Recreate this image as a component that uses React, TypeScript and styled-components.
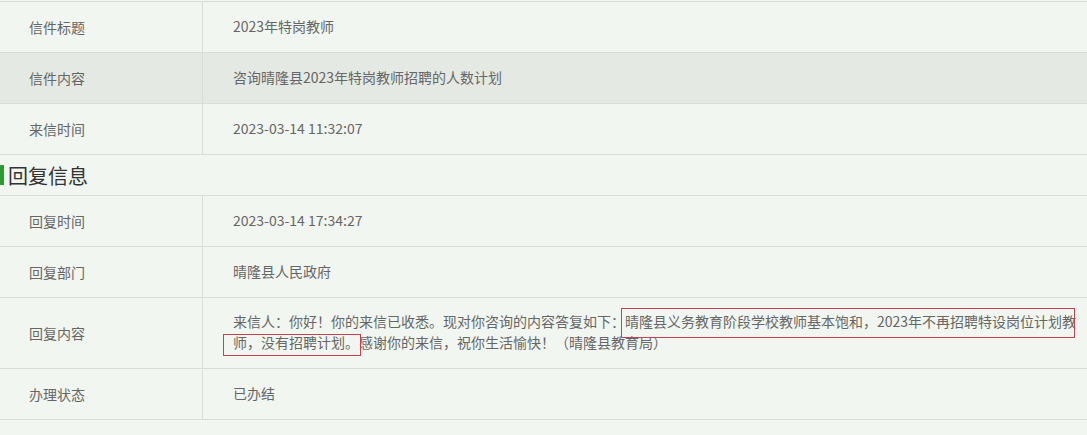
import React from 'react';
import styled, { createGlobalStyle } from 'styled-components';

const GlobalStyle = createGlobalStyle`
  html, body {
    margin: 0;
    padding: 0;
    background: #f1f6f1;
  }
  body {
    font-family: "Noto Sans CJK SC", "Microsoft YaHei", sans-serif;
    color: #666;
  }
`;

const Page = styled.div`
  padding-top: 1px;
  min-height: 434px;
`;

const Table = styled.div<{ $top?: boolean }>`
  display: flex;
  flex-direction: column;
  border-top: ${p => (p.$top ? '1px solid #d9ddd8' : 'none')};
`;

const Row = styled.div<{ $shade?: boolean }>`
  display: grid;
  grid-template-columns: 203px 1fr;
  background: ${p => (p.$shade ? '#e4e9e3' : '#f1f6f1')};
  border-bottom: 1px solid #d9ddd8;
  min-height: 50px;
`;

const Label = styled.div`
  box-sizing: border-box;
  border-right: 1px solid #d9ddd8;
  padding-left: 29px;
  padding-bottom: 1px;
  display: flex;
  align-items: center;
  font-size: 14px;
  color: #666;
`;

const Value = styled.div`
  box-sizing: border-box;
  padding: 13px 9px 15px 30px;
  display: flex;
  align-items: center;
  font-size: 14px;
  line-height: 21px;
  color: #666;
`;

const Text = styled.p`
  margin: 0;
`;

const SectionTitle = styled.h3`
  margin: 0;
  height: 40px;
  display: flex;
  align-items: center;
  gap: 4px;
  font-size: 20px;
  font-weight: normal;
  color: #333;
  border-bottom: 1px solid #d9ddd8;

  &::before {
    content: '';
    width: 4px;
    height: 20px;
    background: #2f9a34;
  }
`;

const Mark = styled.span<{ $t: number; $r: number; $b: number; $l: number }>`
  position: relative;
  white-space: nowrap;

  &::after {
    content: '';
    position: absolute;
    top: ${p => p.$t}px;
    right: ${p => p.$r}px;
    bottom: ${p => p.$b}px;
    left: ${p => p.$l}px;
    border: 1px solid #c8404f;
    pointer-events: none;
  }
`;

const letter = [
  { label: '信件标题', value: '2023年特岗教师' },
  { label: '信件内容', value: '咨询晴隆县2023年特岗教师招聘的人数计划', shade: true },
  { label: '来信时间', value: '2023-03-14 11:32:07' },
];

export default function App() {
  return (
    <Page>
      <GlobalStyle />
      <Table $top>
        {letter.map(r => (
          <Row key={r.label} $shade={r.shade}>
            <Label>{r.label}</Label>
            <Value>{r.value}</Value>
          </Row>
        ))}
      </Table>
      <SectionTitle>回复信息</SectionTitle>
      <Table>
        <Row>
          <Label>回复时间</Label>
          <Value>2023-03-14 17:34:27</Value>
        </Row>
        <Row>
          <Label>回复部门</Label>
          <Value>晴隆县人民政府</Value>
        </Row>
        <Row>
          <Label>回复内容</Label>
          <Value>
            <Text>
              来信人：你好！你的来信已收悉。现对你咨询的内容答复如下：
              <Mark $t={-3} $r={1} $b={-7} $l={-4}>
                晴隆县义务教育阶段学校教师基本饱和，2023年不再招聘特设岗位计划教
              </Mark>
              <Mark $t={2} $r={-2} $b={-4} $l={-10}>师，没有招聘计划。</Mark>
              感谢你的来信，祝你生活愉快！（晴隆县教育局）
            </Text>
          </Value>
        </Row>
        <Row>
          <Label>办理状态</Label>
          <Value>已办结</Value>
        </Row>
      </Table>
    </Page>
  );
}
